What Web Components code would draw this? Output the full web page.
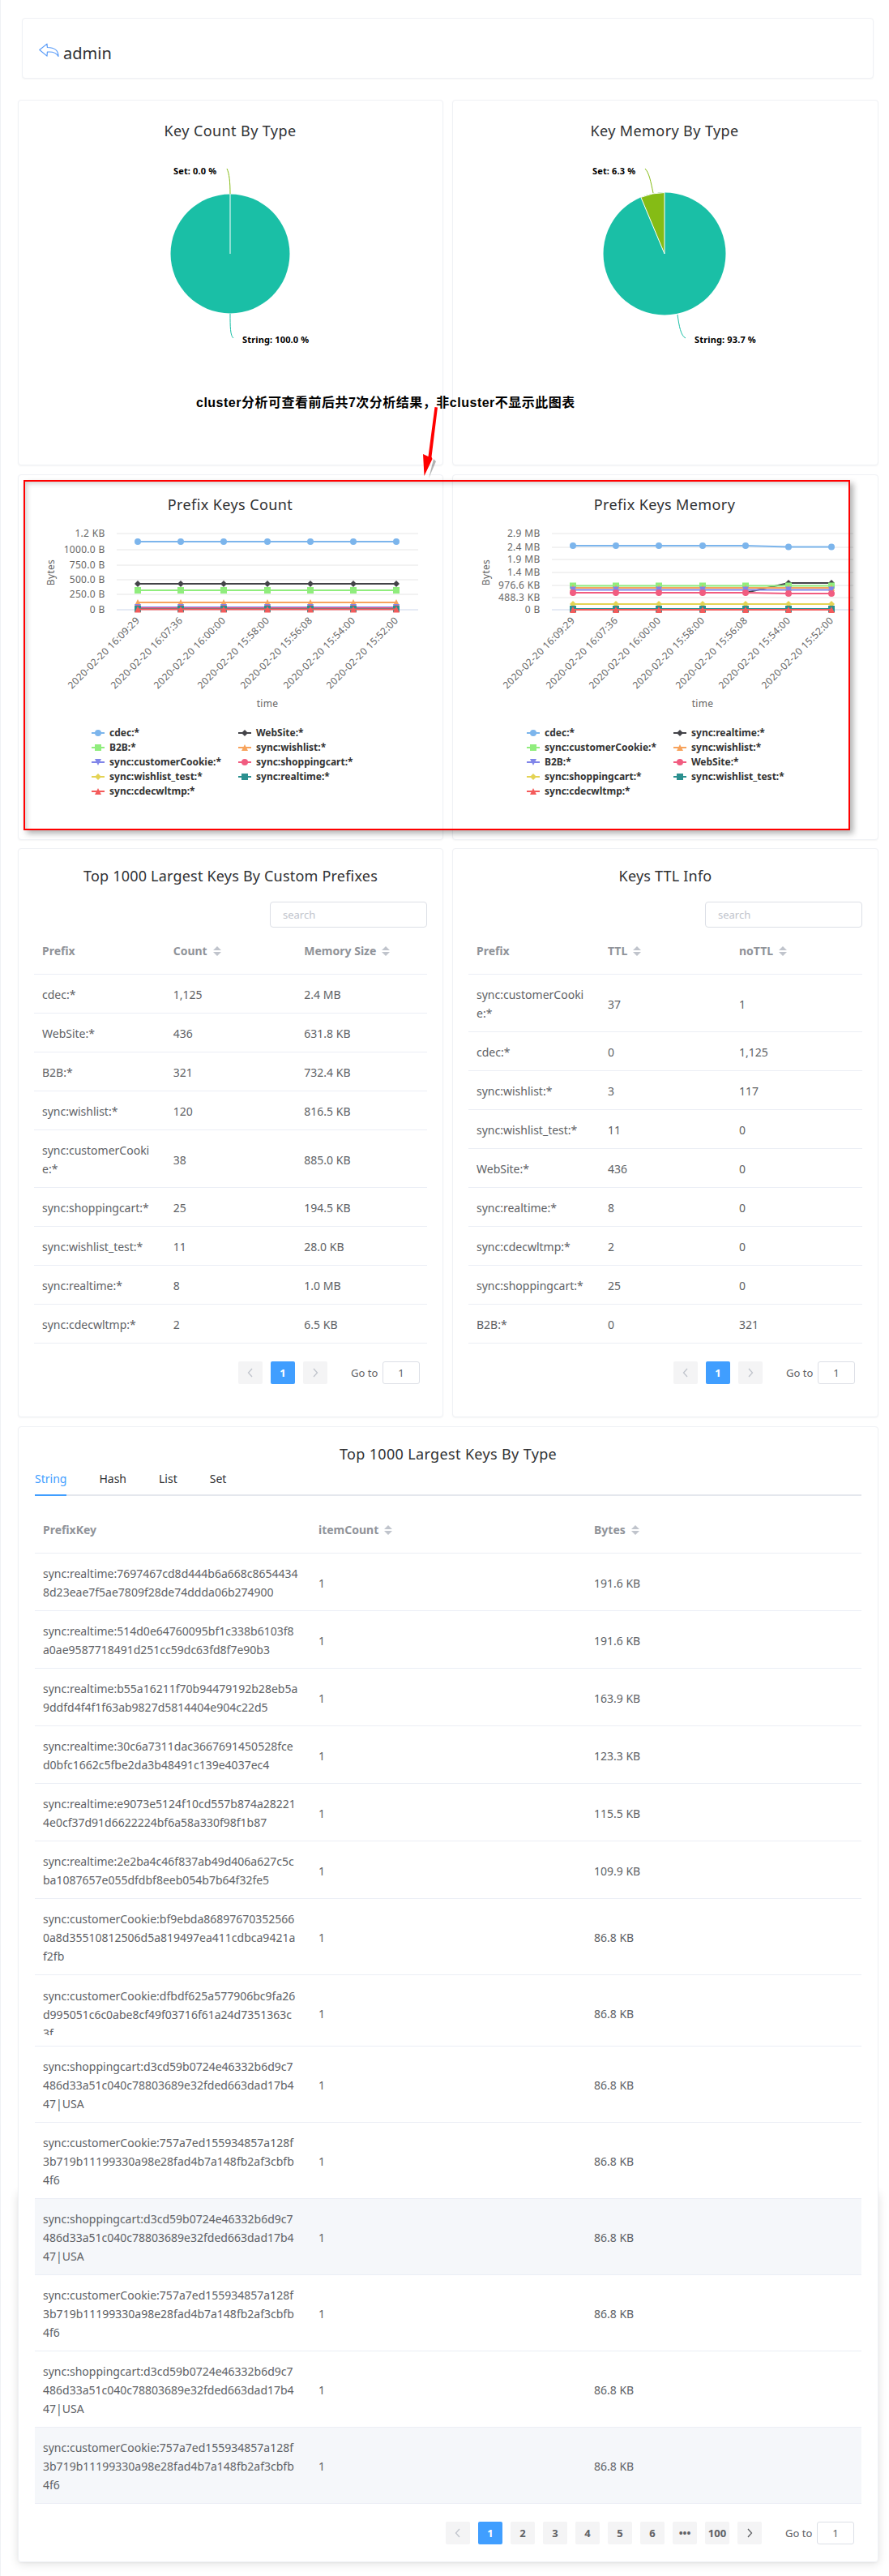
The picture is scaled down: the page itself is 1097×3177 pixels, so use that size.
<!DOCTYPE html>
<html lang="en">
<head>
<meta charset="utf-8">
<title>admin</title>
<style>
  html, body { margin: 0; }
  html { background: linear-gradient(#eff1f5, #eff1f5) 0 0 / 1px 100% no-repeat #fff; }
  body { position: relative; font-family: "Noto Sans", "Noto Sans CJK SC", sans-serif; color: #606266; }
</style>
</head>
<body>
<report-page>
  <header-card slot="head" label="admin"></header-card>

  <x-card slot="row1a" tall="451"><pie-chart caption="Key Count By Type" ox="23" oy="124" cx="284" r="73.5" set="0"
    setlabel="Set: 0.0 %" setx="214" stringlabel="String: 100.0 %" stringx="299"
    setline="M284 239C284 225 283 214 280 208" stringline="M284 387C284 402 284 414 288 417"></pie-chart></x-card>
  <x-card slot="row1b" tall="451"><pie-chart caption="Key Memory By Type" ox="559" oy="124" cx="820" r="75.5" set="22.7"
    setlabel="Set: 6.3 %" setx="731" stringlabel="String: 93.7 %" stringx="857"
    setline="M806 238C803 224 801 213 796 208" stringline="M836 388C838 402 840 414 846 417"></pie-chart></x-card>

  <x-card slot="row2a" tall="451"><line-chart id="countChart" caption="Prefix Keys Count" ox="23" oy="586"></line-chart></x-card>
  <x-card slot="row2b" tall="451"><line-chart id="memoryChart" caption="Prefix Keys Memory" ox="22" oy="586"></line-chart></x-card>

  <x-card slot="row3a" tall="702" pad="21px 19px 0">
    <card-title>Top 1000 Largest Keys By Custom Prefixes</card-title>
    <search-box></search-box>
    <data-table id="prefixTable"></data-table>
    <page-bar pages="1" top="22"></page-bar>
  </x-card>
  <x-card slot="row3b" tall="702" pad="21px 19px 0">
    <card-title>Keys TTL Info</card-title>
    <search-box></search-box>
    <data-table id="ttlTable"></data-table>
    <page-bar pages="1" top="22"></page-bar>
  </x-card>

  <x-card slot="wide" tall="1401" pad="21px 20px 0" lifted>
    <card-title style="letter-spacing:.35px">Top 1000 Largest Keys By Type</card-title>
    <type-tabs></type-tabs>
    <data-table id="typeTable" top="23"></data-table>
    <page-bar pages="1,2,3,4,5,6,...,100" top="22"></page-bar>
  </x-card>
</report-page>
<note-layer></note-layer>

<script>
const FONT = '"Noto Sans", "Noto Sans CJK SC", sans-serif';

class XCard extends HTMLElement {
  constructor() {
    super();
    this.attachShadow({ mode: "open" });
  }
  connectedCallback() {
    const lifted = this.hasAttribute("lifted");
    this.shadowRoot.innerHTML = `
      <style>
        :host { display: block; box-sizing: border-box; position: relative; background: #fff;
          border: 1px solid #eff1f5; border-radius: 4px; box-shadow: 0 1px 2px rgba(0,0,0,.04);
          height: ${this.getAttribute("tall")}px; padding: ${this.getAttribute("pad") || 0}; }
        .lift { position: absolute; left: -1px; right: -1px; top: 943px; bottom: -1px; z-index: -1;
          border-radius: 4px; box-shadow: 0 2px 12px rgba(0,0,0,.12); }
      </style>
      ${lifted ? '<div class="lift"></div>' : ""}
      <slot></slot>`;
  }
}
customElements.define("x-card", XCard);

class ReportPage extends HTMLElement {
  constructor() {
    super();
    this.attachShadow({ mode: "open" });
    this.shadowRoot.innerHTML = `
      <style>
        :host { display: block; box-sizing: border-box; padding: 22px 13px 17px 22px; }
        .head { margin: 0 6px 26px 5px; }
        .row { display: grid; grid-template-columns: 525px 526px; column-gap: 11px; margin-bottom: 11px; }
        .row.r2 { margin-bottom: 10px; }
        .wide { position: relative; z-index: 0; }
      </style>
      <div class="head"><slot name="head"></slot></div>
      <div class="row"><slot name="row1a"></slot><slot name="row1b"></slot></div>
      <div class="row r2"><slot name="row2a"></slot><slot name="row2b"></slot></div>
      <div class="row"><slot name="row3a"></slot><slot name="row3b"></slot></div>
      <div class="wide"><slot name="wide"></slot></div>`;
  }
}
customElements.define("report-page", ReportPage);

class HeaderCard extends HTMLElement {
  constructor() {
    super();
    this.attachShadow({ mode: "open" });
  }
  connectedCallback() {
    this.shadowRoot.innerHTML = `
      <style>
        :host { display: flex; box-sizing: border-box; height: 75px; align-items: center; gap: 5px;
          padding: 13px 20px 0; background: #fff; border: 1px solid #eff1f5; border-radius: 4px;
          box-shadow: 0 1px 2px rgba(0,0,0,.04); font: 20px/30px ${FONT}; color: #303133; }
        svg { display: block; margin-top: -9px; }
      </style>
      <svg width="25" height="18" viewBox="48 54.5 25 18">
        <path d="M48.8 63L58 55.6L58.4 60C66.5 60 72 63 72 71C69.5 66.5 65 65 58.4 65.6L58 70.6Z"
          fill="#fff" stroke="#5a9cf8" stroke-width="1.2" stroke-linejoin="round"/>
      </svg>
      <span>${this.getAttribute("label")}</span>`;
  }
}
customElements.define("header-card", HeaderCard);

class CardTitle extends HTMLElement {
  constructor() {
    super();
    this.attachShadow({ mode: "open" });
    this.shadowRoot.innerHTML = `
      <style>
        :host { display: block; text-align: center; font: 18px/24px ${FONT}; color: #303133; letter-spacing: .2px; }
      </style>
      <slot></slot>`;
  }
}
customElements.define("card-title", CardTitle);

class SearchBox extends HTMLElement {
  constructor() {
    super();
    this.attachShadow({ mode: "open" });
    this.shadowRoot.innerHTML = `
      <style>
        :host { display: flex; justify-content: flex-end; margin: 20px 0 10px; }
        div { box-sizing: border-box; width: 194px; height: 32px; padding: 0 15px; border: 1px solid #dcdfe6;
          border-radius: 4px; font: 13px/30px ${FONT}; color: #c0c4cc; }
      </style>
      <div>search</div>`;
  }
}
customElements.define("search-box", SearchBox);

class SortCaret extends HTMLElement {
  constructor() {
    super();
    this.attachShadow({ mode: "open" });
    this.shadowRoot.innerHTML = `
      <style>
        :host { display: inline-block; vertical-align: -1px; margin-left: 7px; width: 10px; height: 12px; }
        svg { display: block; }
      </style>
      <svg width="10" height="12" viewBox="0 0 10 12"><path d="M5 0L10 5H0ZM0 7H10L5 12Z" fill="#c0c4cc"/></svg>`;
  }
}
customElements.define("sort-caret", SortCaret);

class DataTable extends HTMLElement {
  constructor() {
    super();
    this.attachShadow({ mode: "open" });
  }
  // columns: [{ t, sort }], rows: [[...]], stripes: row indexes, clipped: row index cut off in the capture
  fill({ columns, rows, stripes = [], clipped = -1 }) {
    const head = columns.map(c =>
      `<th>${c.t}${c.sort ? "<sort-caret></sort-caret>" : ""}</th>`).join("");
    const body = rows.map((r, i) => {
      const cls = [stripes.includes(i) ? "stripe" : "", i === clipped ? "clipped" : ""].join(" ");
      return `<tr class="${cls}">` + r.map(c => `<td><div>${c}</div></td>`).join("") + "</tr>";
    }).join("");
    this.shadowRoot.innerHTML = `
      <style>
        :host { display: block; margin-top: ${this.getAttribute("top") || 0}px; }
        table { width: 100%; table-layout: fixed; border-collapse: separate; border-spacing: 0;
          font: 14px/23px ${FONT}; color: #606266; }
        th, td { padding: 13px 10px 11px; border-bottom: 1px solid #ebeef5; text-align: left; }
        th { padding: 7px 10px 17px; color: #909399; font-weight: 700; white-space: nowrap; }
        td div { white-space: pre; }
        tr.stripe td { background: #f5f7fa; }
        tr.clipped td { padding: 20px 10px 13px; }
        tr.clipped td:first-child { padding-top: 14px; }
        tr.clipped td:first-child div { height: 60px; overflow: hidden; }
      </style>
      <table><thead><tr>${head}</tr></thead><tbody>${body}</tbody></table>`;
  }
}
customElements.define("data-table", DataTable);

class PageBar extends HTMLElement {
  constructor() {
    super();
    this.attachShadow({ mode: "open" });
  }
  connectedCallback() {
    const pages = this.getAttribute("pages").split(",");
    const chevron = d => `<svg width="8" height="12" viewBox="0 0 8 12"><path d="${d}" fill="none" stroke="currentColor" stroke-width="1.3"/></svg>`;
    const nums = pages.map((p, i) => {
      const dots = p === "...";
      return `<b class="btn${i === 0 ? " on" : ""}">${dots ? "\u2022\u2022\u2022" : p}</b>`;
    }).join("");
    const many = pages.length > 1;
    this.shadowRoot.innerHTML = `
      <style>
        :host { display: flex; justify-content: flex-end; align-items: center; margin-top: ${this.getAttribute("top")}px;
          padding-right: 9px; height: 28px; font: 13px/28px ${FONT}; color: #606266; }
        .btn { box-sizing: border-box; min-width: 30px; height: 28px; margin: 0 5px; padding: 0 2px; background: #f4f4f5;
          border-radius: 2px; text-align: center; font-weight: 700; color: #606266; display: flex;
          align-items: center; justify-content: center; }
        .btn.on { background: #409eff; color: #fff; }
        .btn.off { color: #c0c4cc; }
        .btn.next { color: #606266; }
        .goto { margin-left: 24px; width: 35px; white-space: nowrap; }
        .num { box-sizing: border-box; width: 46px; height: 28px; margin-left: 4px; border: 1px solid #dcdfe6;
          border-radius: 3px; text-align: center; line-height: 26px; }
      </style>
      <span class="btn off">${chevron("M6 1L1.5 6L6 11")}</span>
      ${nums}
      <span class="btn ${many ? "next" : "off"}">${chevron("M2 1L6.5 6L2 11")}</span>
      <span class="goto">Go to</span>
      <span class="num">1</span>`;
  }
}
customElements.define("page-bar", PageBar);

class TypeTabs extends HTMLElement {
  constructor() {
    super();
    this.attachShadow({ mode: "open" });
    this.shadowRoot.innerHTML = `
      <style>
        :host { display: flex; height: 40px; box-sizing: border-box; border-bottom: 2px solid #e4e7ed;
          font: 14px/38px ${FONT}; color: #303133; }
        span { padding: 0 20px; height: 40px; box-sizing: border-box; }
        span.on { color: #409eff; padding: 0; margin-right: 20px; border-bottom: 2px solid #409eff; }
      </style>
      <span class="on">String</span><span>Hash</span><span>List</span><span>Set</span>`;
  }
}
customElements.define("type-tabs", TypeTabs);

class PieChart extends HTMLElement {
  constructor() {
    super();
    this.attachShadow({ mode: "open" });
  }
  connectedCallback() {
    const a = n => this.getAttribute(n);
    const ox = +a("ox"), oy = +a("oy"), cx = +a("cx"), cy = 313, r = +a("r"), deg = +a("set");
    const rad = deg * Math.PI / 180;
    const ex = cx - r * Math.sin(rad), ey = cy - r * Math.cos(rad);
    const slice = deg > 0
      ? `<path d="M${cx} ${cy}L${cx} ${cy - r}A${r} ${r} 0 0 0 ${ex} ${ey}Z" fill="#85bc15" stroke="#fff" stroke-width="1"/>`
      : `<path d="M${cx} ${cy}V${cy - r}" stroke="#fff" stroke-width="1"/>`;
    this.shadowRoot.innerHTML = `
      <style>
        :host { display: block; }
        svg { display: block; }
        text { font-family: ${FONT}; }
        .t { font-size: 18px; fill: #303133; letter-spacing: .4px; }
        .l { font-size: 11px; font-weight: 700; fill: #000; letter-spacing: .15px; }
      </style>
      <svg width="524" height="449" viewBox="${ox} ${oy} 524 449">
        <text class="t" x="${cx}" y="168" text-anchor="middle">${a("caption")}</text>
        <circle cx="${cx}" cy="${cy}" r="${r}" fill="#1abfa6"/>
        ${slice}
        <path d="${a("setline")}" fill="none" stroke="#85bc15"/>
        <path d="${a("stringline")}" fill="none" stroke="#1abfa6"/>
        <text class="l" x="${a("setx")}" y="215">${a("setlabel")}</text>
        <text class="l" x="${a("stringx")}" y="423">${a("stringlabel")}</text>
      </svg>`;
  }
}
customElements.define("pie-chart", PieChart);

const XS = [170, 223, 276, 330, 383, 436, 489];
const TIMES = ["2020-02-20 16:09:29", "2020-02-20 16:07:36", "2020-02-20 16:00:00", "2020-02-20 15:58:00",
  "2020-02-20 15:56:08", "2020-02-20 15:54:00", "2020-02-20 15:52:00"];
const STYLES = [["#7cb5ec", "circle"], ["#434348", "diamond"], ["#90ed7d", "square"], ["#f7a35c", "triangle"],
  ["#8085e9", "down"], ["#f15c80", "circle"], ["#e4d354", "diamond"], ["#2b908f", "square"], ["#f45b5b", "triangle"]];

function marker(kind, x, y, color) {
  if (kind === "circle") return `<circle cx="${x}" cy="${y}" r="4" fill="${color}"/>`;
  if (kind === "square") return `<rect x="${x - 4}" y="${y - 4}" width="8" height="8" fill="${color}"/>`;
  if (kind === "diamond") return `<path d="M${x} ${y - 4}L${x + 4} ${y}L${x} ${y + 4}L${x - 4} ${y}Z" fill="${color}"/>`;
  if (kind === "triangle") return `<path d="M${x} ${y - 4}L${x + 4} ${y + 4}H${x - 4}Z" fill="${color}"/>`;
  return `<path d="M${x - 4} ${y - 4}H${x + 4}L${x} ${y + 4}Z" fill="${color}"/>`;
}

class LineChart extends HTMLElement {
  constructor() {
    super();
    this.attachShadow({ mode: "open" });
  }
  // yaxis: [[label, y]], series: [name, y values in page pixels], drawn and listed in order
  plot({ yaxis, series, legend }) {
    const ox = +this.getAttribute("ox"), oy = +this.getAttribute("oy");
    const grid = yaxis.map(([t, y], i) => `
      <path d="M144 ${y}H516" stroke="${i === yaxis.length - 1 ? "#ccd6eb" : "#e6e6e6"}"/>
      <text class="a" x="129.5" y="${y + 4}" text-anchor="end">${t}</text>`).join("");
    const lines = series.map(([name, ys], i) => {
      const [color, kind] = STYLES[i];
      const pts = XS.map((x, k) => `${x},${Array.isArray(ys) ? ys[k] : ys}`).join(" ");
      const dots = XS.map((x, k) => marker(kind, x, Array.isArray(ys) ? ys[k] : ys, color)).join("");
      return `<polyline points="${pts}" fill="none" stroke="${color}" stroke-width="2"/>${dots}`;
    }).join("");
    const ticks = XS.map((x, i) =>
      `<text class="a" x="${x + 3}" y="766" text-anchor="end" transform="rotate(-45 ${x + 3} 766)">${TIMES[i]}</text>`).join("");
    const keys = legend.map((name, i) => {
      const [color, kind] = STYLES[i];
      const x = i % 2 ? 294 : 113, y = 904 + Math.floor(i / 2) * 18;
      return `<path d="M${x} ${y}h16" stroke="${color}" stroke-width="2"/>${marker(kind, x + 8, y, color)}
        <text class="k" x="${x + 22}" y="${y + 4}">${name}</text>`;
    }).join("");
    this.shadowRoot.innerHTML = `
      <style>
        :host { display: block; }
        svg { display: block; }
        text { font-family: ${FONT}; }
        .t { font-size: 18px; fill: #303133; letter-spacing: .4px; }
        .a { font-size: 12px; fill: #666; letter-spacing: .3px; }
        .k { font-size: 12px; font-weight: 700; fill: #333; }
      </style>
      <svg width="524" height="449" viewBox="${ox} ${oy} 524 449">
        <text class="t" x="${XS[3] + ox - 23 - 46}" y="629" text-anchor="middle">${this.getAttribute("caption")}</text>
        ${grid}${lines}${ticks}
        <text class="a" x="330" y="872" text-anchor="middle">time</text>
        <text class="a" x="0" y="0" text-anchor="middle" transform="translate(67 706) rotate(-90)">Bytes</text>
        ${keys}
      </svg>`;
  }
}
customElements.define("line-chart", LineChart);

class NoteLayer extends HTMLElement {
  constructor() {
    super();
    this.attachShadow({ mode: "open" });
    this.shadowRoot.innerHTML = `
      <style>
        :host { position: absolute; left: 0; top: 0; width: 1097px; height: 3177px; pointer-events: none; }
        .text { position: absolute; left: 242px; top: 485px; white-space: nowrap; letter-spacing: .5px;
          font: 700 16px/24px "Liberation Sans", "Noto Sans CJK SC", sans-serif; color: #000; }
        .box { position: absolute; left: 29px; top: 592px; width: 1020px; height: 432px; box-sizing: border-box;
          border: 2px solid #f00; box-shadow: 4px 4px 7px rgba(0,0,0,.3), inset 4px 4px 6px -2px rgba(0,0,0,.2); }
        svg { position: absolute; left: 510px; top: 495px; }
      </style>
      <div class="text">cluster分析可查看前后共7次分析结果，非cluster不显示此图表</div>
      <svg width="50" height="100" viewBox="510 495 50 100">
        <path d="M544 505L535 566L538 569L529 590L535 566Z" fill="rgba(0,0,0,.3)"/>
        <path d="M536.5 502L540 502.5L532.5 563.5L533.5 566L523.5 587L522 560L528.5 563Z" fill="#f00"/>
      </svg>
      <div class="box"></div>`;
  }
}
customElements.define("note-layer", NoteLayer);

// table data
const sortCols = (a, b, c) => [{ t: a }, { t: b, sort: true }, { t: c, sort: true }];
document.getElementById("prefixTable").fill({
  columns: sortCols("Prefix", "Count", "Memory Size"),
  rows: [["cdec:*", "1,125", "2.4 MB"], ["WebSite:*", "436", "631.8 KB"], ["B2B:*", "321", "732.4 KB"],
    ["sync:wishlist:*", "120", "816.5 KB"], ["sync:customerCooki\ne:*", "38", "885.0 KB"],
    ["sync:shoppingcart:*", "25", "194.5 KB"], ["sync:wishlist_test:*", "11", "28.0 KB"],
    ["sync:realtime:*", "8", "1.0 MB"], ["sync:cdecwltmp:*", "2", "6.5 KB"]]
});
document.getElementById("ttlTable").fill({
  columns: sortCols("Prefix", "TTL", "noTTL"),
  rows: [["sync:customerCooki\ne:*", "37", "1"], ["cdec:*", "0", "1,125"], ["sync:wishlist:*", "3", "117"],
    ["sync:wishlist_test:*", "11", "0"], ["WebSite:*", "436", "0"], ["sync:realtime:*", "8", "0"],
    ["sync:cdecwltmp:*", "2", "0"], ["sync:shoppingcart:*", "25", "0"], ["B2B:*", "0", "321"]]
});
const cart = "sync:shoppingcart:d3cd59b0724e46332b6d9c7\n486d33a51c040c78803689e32fded663dad17b4\n47|USA";
const cookie = "sync:customerCookie:757a7ed155934857a128f\n3b719b11199330a98e28fad4b7a148fb2af3cbfb\n4f6";
document.getElementById("typeTable").fill({
  columns: [{ t: "PrefixKey" }, { t: "itemCount", sort: true }, { t: "Bytes", sort: true }],
  stripes: [10, 13],
  clipped: 7,
  rows: [
    ["sync:realtime:7697467cd8d444b6a668c8654434\n8d23eae7f5ae7809f28de74ddda06b274900", "1", "191.6 KB"],
    ["sync:realtime:514d0e64760095bf1c338b6103f8\na0ae9587718491d251cc59dc63fd8f7e90b3", "1", "191.6 KB"],
    ["sync:realtime:b55a16211f70b94479192b28eb5a\n9ddfd4f4f1f63ab9827d5814404e904c22d5", "1", "163.9 KB"],
    ["sync:realtime:30c6a7311dac3667691450528fce\nd0bfc1662c5fbe2da3b48491c139e4037ec4", "1", "123.3 KB"],
    ["sync:realtime:e9073e5124f10cd557b874a28221\n4e0cf37d91d6622224bf6a58a330f98f1b87", "1", "115.5 KB"],
    ["sync:realtime:2e2ba4c46f837ab49d406a627c5c\nba1087657e055dfdbf8eeb054b7b64f32fe5", "1", "109.9 KB"],
    ["sync:customerCookie:bf9ebda86897670352566\n0a8d35510812506d5a819497ea411cdbca9421a\nf2fb", "1", "86.8 KB"],
    ["sync:customerCookie:dfbdf625a577906bc9fa26\nd995051c6c0abe8cf49f03716f61a24d7351363c\n3f", "1", "86.8 KB"],
    [cart, "1", "86.8 KB"], [cookie, "1", "86.8 KB"], [cart, "1", "86.8 KB"],
    [cookie, "1", "86.8 KB"], [cart, "1", "86.8 KB"], [cookie, "1", "86.8 KB"]]
});

// chart data, y values are pixel rows of the plot
document.getElementById("countChart").plot({
  yaxis: [["1.2 KB", 658], ["1000.0 B", 678], ["750.0 B", 697], ["500.0 B", 715], ["250.0 B", 733], ["0 B", 752]],
  series: [["cdec", 668], ["WebSite", 720], ["B2B", 728], ["wishlist", 743], ["cookie", 749],
    ["cart", 750], ["test", 751], ["realtime", 751], ["tmp", 751.5]],
  legend: ["cdec:*", "WebSite:*", "B2B:*", "sync:wishlist:*", "sync:customerCookie:*", "sync:shoppingcart:*",
    "sync:wishlist_test:*", "sync:realtime:*", "sync:cdecwltmp:*"]
});
document.getElementById("memoryChart").plot({
  yaxis: [["2.9 MB", 658], ["2.4 MB", 675], ["1.9 MB", 690], ["1.4 MB", 706], ["976.6 KB", 722], ["488.3 KB", 737], ["0 B", 752]],
  series: [["cdec", [673, 673, 673, 673, 673, 674.5, 674.5]],
    ["realtime", [731, 731, 731, 731, 731, 719, 719]],
    ["cookie", 722.5], ["wishlist", 725], ["b2b", 727.5],
    ["website", [731, 731, 731, 731, 731, 732, 732]],
    ["cart", 745], ["test", 751], ["tmp", 752]],
  legend: ["cdec:*", "sync:realtime:*", "sync:customerCookie:*", "sync:wishlist:*", "B2B:*", "WebSite:*",
    "sync:shoppingcart:*", "sync:wishlist_test:*", "sync:cdecwltmp:*"]
});
</script>
</body>
</html>
